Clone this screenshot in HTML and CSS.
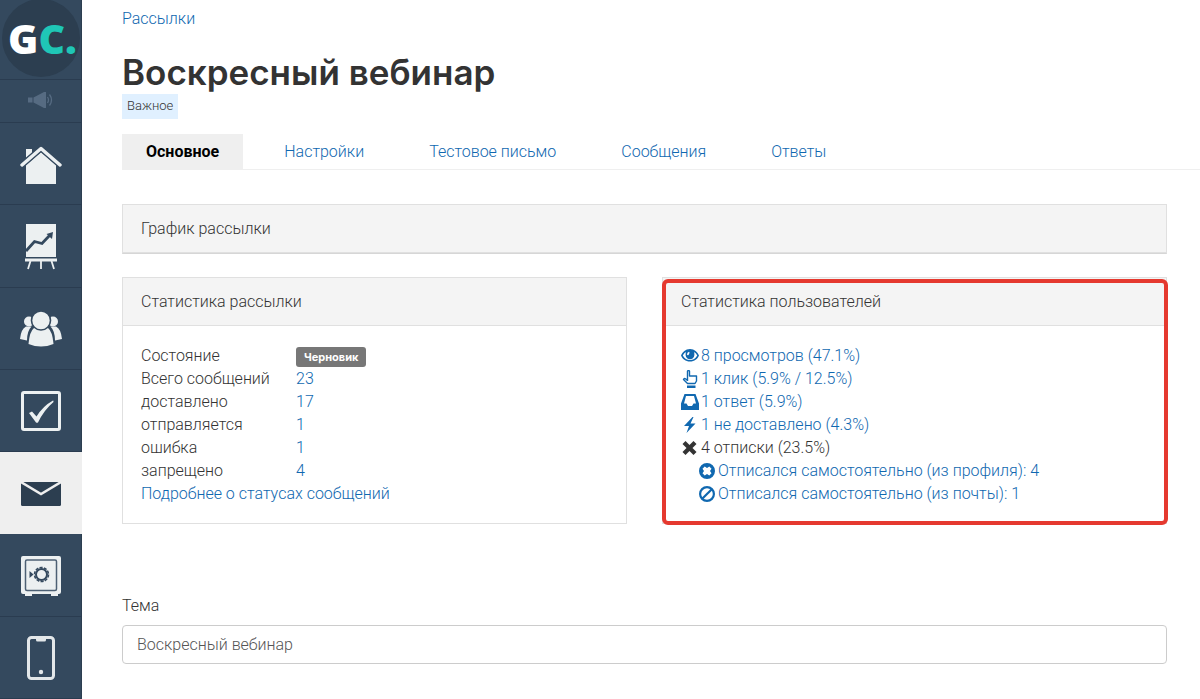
FILE: index.html
```
<!DOCTYPE html>
<html lang="ru">
<head>
<meta charset="utf-8">
<title>Воскресный вебинар</title>
<link rel="stylesheet" href="styles.css">
</head>
<body>
<div class="app">
  <nav class="sidebar" aria-label="Главное меню">
    <a class="side-logo" href="#" aria-label="GC">
      <span class="logo-disc"><span class="logo-text">G<span class="logo-accent">C.</span></span></span>
    </a>
    <a class="side-news" href="#" aria-label="Объявления">
      <svg width="26" height="18" viewBox="0 0 26 18" fill="#566b82">
        <path d="M0 6.500h4.500v5H0zM5.500 6.500 16 1h2v16h-2L5.500 11.500z"/>
        <path d="M19.500 6q2 3 0 6M21.500 3.500q4 5.500 0 11" fill="none" stroke="#566b82" stroke-width="1.300"/>
      </svg>
    </a>
    <a class="side-item" href="#" aria-label="Главная">
      <svg width="42" height="40" viewBox="0 0 42 40" fill="#ecf0f1">
        <path d="M6 4h6v4L6 13z"/>
        <path d="M6 20 21 7l15 13v19H6z"/>
        <path d="M2 20 21 3.500 40 20" fill="none" stroke="#34495e" stroke-width="6"/>
        <path d="M2 20 21 3.500 40 20" fill="none" stroke="#ecf0f1" stroke-width="3.400" stroke-linecap="round" stroke-linejoin="round"/>
      </svg>
    </a>
    <a class="side-item" href="#" aria-label="Отчёты">
      <svg width="34" height="46" viewBox="0 0 34 46" fill="#ecf0f1">
        <path d="M2 0h30v33H2z"/>
        <path d="M2 27 10.500 17.500 18 19.500 26 11" fill="none" stroke="#34495e" stroke-width="2.800"/>
        <path d="M29 8 28 15 22.500 10z" fill="#34495e"/>
        <path d="M1 34.500h32v3H1z"/>
        <path d="M6.500 37 4 45M17 37v8M27.500 37 30 45" fill="none" stroke="#ecf0f1" stroke-width="1.800"/>
      </svg>
    </a>
    <a class="side-item" href="#" aria-label="Пользователи">
      <svg width="42" height="36" viewBox="0 0 42 36" fill="#ecf0f1">
        <circle cx="9" cy="10.500" r="5"/><circle cx="33" cy="10.500" r="5"/>
        <path d="M0 28Q1 18 6 15.500h5.500Q7 20 7 29.500zM42 28Q41 18 36 15.500h-5.500Q35 20 35 29.500z"/>
        <path d="M8.500 33Q9.500 20.500 14 17h14q4.500 3.500 5.500 16-12.500 5-25 0z"/>
        <circle cx="21" cy="9.500" r="9.500" stroke="#34495e" stroke-width="1.600"/>
      </svg>
    </a>
    <a class="side-item" href="#" aria-label="Задачи">
      <svg width="40" height="40" viewBox="0 0 40 40" fill="none">
        <rect x="1.500" y="1.500" width="37" height="37" rx="1.500" stroke="#ecf0f1" stroke-width="3"/>
        <path d="M8 22 11 20.500 15.500 25.500Q22 15 32 9.500 32.500 9 32.500 11 23 19 17 31.500 16 32 15 31.500z" fill="#ecf0f1"/>
      </svg>
    </a>
    <a class="side-item side-item-active" href="#" aria-label="Рассылки" aria-current="page">
      <svg width="40" height="24" viewBox="0 0 40 24">
        <rect width="40" height="24" rx="1.500" fill="#2c3e50"/>
        <path d="M0 0 20 12 40 0" fill="none" stroke="#efefef" stroke-width="2.400"/>
      </svg>
    </a>
    <a class="side-item" href="#" aria-label="Финансы">
      <svg width="40" height="40" viewBox="0 0 40 40">
        <path d="M2 0h36q2 0 2 2v34q0 2-2 2h-1v2h-7v-2H11v2H4v-2H2q-2 0-2-2V2q0-2 2-2z" fill="#ecf0f1"/>
        <rect x="4.500" y="4" width="31" height="30.500" rx="1.500" fill="none" stroke="#4d6074" stroke-width="1.500"/>
        <circle cx="20.500" cy="18.500" r="5.500" fill="none" stroke="#34495e" stroke-width="2"/>
        <circle cx="20.500" cy="18.500" r="7" fill="none" stroke="#34495e" stroke-width="1.600" stroke-dasharray="3.100 1.300"/>
        <path d="M8.500 15v7l4-3.500z" fill="#34495e"/>
      </svg>
    </a>
    <a class="side-item" href="#" aria-label="Приложение">
      <svg width="28" height="44" viewBox="0 0 28 44">
        <rect x="1.500" y="1.500" width="25" height="41" rx="3" fill="none" stroke="#e3e7e9" stroke-width="3"/>
        <path d="M9 2h10v2q0 1.500-1.500 1.500h-7Q9 5.500 9 4z" fill="#e3e7e9"/>
        <circle cx="14" cy="36" r="2.200" fill="#e3e7e9"/>
      </svg>
    </a>
  </nav>

  <main class="content">
    <header class="page-head">
      <a class="breadcrumb" href="#">Рассылки</a>
      <h1 class="title">Воскресный вебинар</h1>
      <span class="tag">Важное</span>
    </header>

    <nav class="tabs" aria-label="Разделы рассылки">
      <a class="tab tab-active" href="#" aria-current="page">Основное</a>
      <a class="tab" href="#">Настройки</a>
      <a class="tab" href="#">Тестовое письмо</a>
      <a class="tab" href="#">Сообщения</a>
      <a class="tab" href="#">Ответы</a>
    </nav>

    <div class="body">
      <section class="panel panel-closed">
        <h2 class="panel-title">График рассылки</h2>
      </section>

      <div class="columns">
        <section class="panel">
          <h2 class="panel-title">Статистика рассылки</h2>
          <div class="panel-body">
            <table class="stats">
              <tr><th scope="row">Состояние</th><td><span class="badge">Черновик</span></td></tr>
              <tr><th scope="row">Всего сообщений</th><td><a href="#">23</a></td></tr>
              <tr><th scope="row">доставлено</th><td><a href="#">17</a></td></tr>
              <tr><th scope="row">отправляется</th><td><a href="#">1</a></td></tr>
              <tr><th scope="row">ошибка</th><td><a href="#">1</a></td></tr>
              <tr><th scope="row">запрещено</th><td><a href="#">4</a></td></tr>
            </table>
            <a href="#">Подробнее о статусах сообщений</a>
          </div>
        </section>

        <section class="panel panel-marked">
          <h2 class="panel-title">Статистика пользователей</h2>
          <div class="panel-body">
            <ul class="actions">
              <li><a href="#"><svg class="icon" viewBox="0 0 18 16"><path fill="currentColor" fill-rule="evenodd" d="M9 1C4.500 1 1.500 4 0 7.500 1.500 11 4.500 13.500 9 13.500S16.500 11 18 7.500C16.500 4 13.500 1 9 1zM1.800 7.500Q2.800 5.300 4.800 4 3.500 11 9 11.300 14.500 11 13.200 4 15.200 5.300 16.200 7.500q-2.500 4.500-7.200 4.500T1.800 7.500zM8 3.800Q6 4.300 6 6.500q.3 1 1.200.8Q8.500 6.500 8.500 4.300z"/></svg>8 просмотров (47.1%)</a></li>
              <li><a href="#"><svg class="icon" viewBox="0 0 18 18"><path fill="none" stroke="currentColor" stroke-width="1.400" stroke-linejoin="round" d="M6.500 11V1.200q1-1.400 2 0V6h7v5l-1.500 2.500H6.500L2.500 9.500q.5-1.500 2-.7l2 1.700"/><path fill="currentColor" d="M6 15.500h8.500V18H6z"/></svg>1 клик (5.9% / 12.5%)</a></li>
              <li><a href="#"><svg class="icon" viewBox="0 0 18 16"><path fill="currentColor" fill-rule="evenodd" d="M3.500 0h11L18 9.500V16H0V9.500zM5 2 3 9.500h2.500L7 12h4l1.500-2.500H15L13 2z"/></svg>1 ответ (5.9%)</a></li>
              <li><a href="#"><svg class="icon" viewBox="0 0 18 16"><path fill="currentColor" d="M11.500 0 3 9h5l-2.500 7L14.500 6.500h-5L12.500 0z"/></svg>1 не доставлено (4.3%)</a></li>
              <li><span class="action-text"><svg class="icon" viewBox="0 0 18 16"><path fill="currentColor" d="M4.500 1 8.500 5l4-4 3 3-4 4 4 4-3 3-4-4-4 4-3-3 4-4-4-4z"/></svg>4 отписки (23.5%)</span>
                <ul class="actions actions-nested">
                  <li><a href="#"><svg class="icon" viewBox="0 0 18 18"><path fill="currentColor" fill-rule="evenodd" d="M9 1a8 8 0 1 0 0 16A8 8 0 1 0 9 1zM6.700 4.500 9 6l2.300-1.500 2.200 2.200L12 9l1.500 2.300-2.200 2.200L9 12l-2.300 1.500-2.200-2.200L6 9 4.500 6.700z"/></svg>Отписался самостоятельно (из профиля): 4</a></li>
                  <li><a href="#"><svg class="icon" viewBox="0 0 18 18"><g fill="none" stroke="currentColor" stroke-width="2.200"><circle cx="9" cy="9" r="6.900"/><path d="m4.200 13.800 9.600-9.600"/></g></svg>Отписался самостоятельно (из почты): 1</a></li>
                </ul>
              </li>
            </ul>
          </div>
        </section>
      </div>

      <form class="subject">
        <label for="subject">Тема</label>
        <input id="subject" type="text" value="Воскресный вебинар">
      </form>
    </div>
  </main>
</div>
</body>
</html>
```
FILE: styles.css
```
* {
  box-sizing: border-box;
}

body {
  margin: 0;
  background: #fff;
  color: #333;
  font: 300 16px/23px Roboto, "Liberation Sans", sans-serif;
}

a {
  color: #1068b0;
  text-decoration: none;
}

ul {
  list-style: none;
  margin: 0;
  padding: 0;
}

.app {
  display: flex;
  min-height: 100vh;
}

/* Sidebar */
.sidebar {
  display: flex;
  flex-direction: column;
  flex: 0 0 82px;
  background: #34495e;
}

.sidebar a {
  display: flex;
  align-items: center;
  justify-content: center;
  border-right: 1px solid #2c3e50;
  border-bottom: 1px solid #2a3c50;
}

.sidebar .side-logo {
  height: 80px;
  padding-bottom: 3px;
}

.logo-disc {
  display: flex;
  align-items: center;
  justify-content: center;
  flex: none;
  width: 78px;
  height: 78px;
  border-radius: 50%;
  background: #2c3e50;
}

.logo-text {
  padding-left: 4px;
  color: #fff;
  font: 800 41px/44px "Open Sans", sans-serif;
}

.logo-accent {
  color: #1fc6b6;
}

.sidebar .side-news {
  height: 43px;
  padding-bottom: 2px;
}

.sidebar .side-item {
  flex: 1 0 82px;
  padding-top: 2px;
}

.sidebar .side-item-active {
  background: #efefef;
  border-color: #efefef;
}

/* Page head */
.content {
  flex: 1;
  min-width: 0;
  padding: 7px 0 32px 40px;
}

.page-head {
  display: flex;
  flex-direction: column;
  align-items: flex-start;
}

.title {
  margin: 20px 0 0;
  font: 600 35px/44px Inter, "Liberation Sans", sans-serif;
}

.tag {
  padding: 0 5px 2px;
  background: #e0f0ff;
  font-size: 13px;
}

/* Tabs */
.tabs {
  display: flex;
  gap: 17px;
  margin-top: 15px;
  border-bottom: 1px solid #efefef;
}

.tab {
  padding: 6px 24px;
}

.tab-active {
  background: #efefef;
  color: #000;
  font-weight: 700;
}

/* Panels */
.body {
  padding: 34px 33px 0 0;
}

.panel {
  border: 1px solid #e0e0e0;
}

.panel-title {
  margin: 0;
  padding: 12px 18px;
  border-bottom: 1px solid #e0e0e0;
  background: #f4f4f4;
  font-size: 16px;
  font-weight: 300;
}

.panel-closed {
  border-bottom-color: #d6d6d6;
}

.panel-body {
  padding: 18px;
}

.columns {
  display: grid;
  grid-template-columns: 1fr 1fr;
  gap: 35px;
  margin-top: 23px;
}

.panel-marked {
  position: relative;
}

.panel-marked::after {
  content: "";
  position: absolute;
  inset: 1px -2px -2px -1px;
  border: 4px solid #e5392f;
  border-radius: 6px;
  pointer-events: none;
}

.stats {
  border-collapse: collapse;
}

.stats th,
.stats td {
  padding: 0;
  font-weight: inherit;
  text-align: left;
}

.stats th {
  width: 155px;
}

.badge {
  display: block;
  margin-top: 3px;
  padding: 0 8px;
  border-radius: 3px;
  background: #777;
  color: #fff;
  font: 700 11px/20px Inter, "Liberation Sans", sans-serif;
}

.stats a {
  display: block;
}

.actions a,
.action-text {
  display: flex;
  align-items: center;
  gap: 2px;
}

.actions-nested {
  padding-left: 17px;
}

.icon {
  width: 18px;
  height: 18px;
  flex: none;
}

/* Subject field */
.subject {
  margin-top: 70px;
}

.subject label {
  display: block;
}

.subject input {
  display: block;
  width: 100%;
  height: 39px;
  margin-top: 8px;
  padding: 0 14px;
  border: 1px solid #ccc;
  border-radius: 4px;
  background: #fff;
  color: #555;
  font: inherit;
}
```
